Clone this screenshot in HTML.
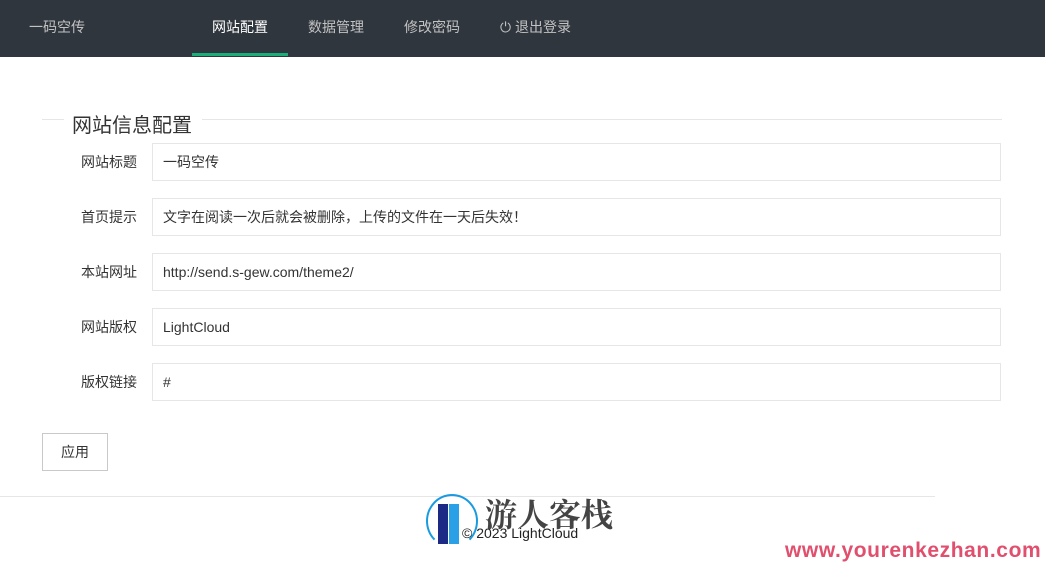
<!DOCTYPE html>
<html><head><meta charset="utf-8"><style>
body{margin:0;width:1045px;height:569px;background:#fff;font-family:"Liberation Sans","Noto Sans CJK SC",sans-serif;position:relative;overflow:hidden;color:#333}
.nav{position:absolute;left:0;top:0;width:1045px;height:57px;background:#30363e}
.nav span{position:absolute;top:17px;font-size:14px;color:#c2c2c2}
.ul{position:absolute;left:192px;top:53px;width:96px;height:3px;background:#1aae7a}
.legend{position:absolute;left:42px;top:119px;width:960px;border-top:1px solid #e6e6e6}
.legend span{position:absolute;left:22px;top:-11px;background:#fff;padding:0 10px 0 8px;font-size:20px;color:#333}
.lab{position:absolute;left:60px;width:77px;text-align:right;font-size:14px;color:#333}
.inp{position:absolute;left:152px;width:837px;height:36px;border:1px solid #e6e6e6;padding-left:10px;line-height:36px;font-size:14px;color:#333}
.btn{position:absolute;left:42px;top:433px;width:64px;height:36px;border:1px solid #c9c9c9;text-align:center;line-height:36px;font-size:14px}
</style></head><body>
<div class="nav">
<span style="left:29px">一码空传</span>
<span style="left:212px;color:#fff">网站配置</span>
<span style="left:308px">数据管理</span>
<span style="left:404px">修改密码</span>
<span style="left:500px">⏻ 退出登录</span>
<div class="ul"></div>
</div>
<div class="legend"><span>网站信息配置</span></div>
<div class="lab" style="top:152px">网站标题</div><div class="inp" style="top:143px">一码空传</div>
<div class="lab" style="top:207px">首页提示</div><div class="inp" style="top:198px">文字在阅读一次后就会被删除，上传的文件在一天后失效！</div>
<div class="lab" style="top:262px">本站网址</div><div class="inp" style="top:253px">http://send.s-gew.com/theme2/</div>
<div class="lab" style="top:317px">网站版权</div><div class="inp" style="top:308px">LightCloud</div>
<div class="lab" style="top:372px">版权链接</div><div class="inp" style="top:363px">#</div>
<div class="btn">应用</div>
<div style="position:absolute;left:0;top:496px;width:935px;border-top:1px solid #e6e6e6"></div>
<div style="position:absolute;left:426px;top:494px;width:48px;height:50px;border:2px solid #1a9be0;border-radius:50%;border-bottom-color:transparent"></div>
<div style="position:absolute;left:438px;top:504px;width:10px;height:40px;background:#1c2a86"></div>
<div style="position:absolute;left:449px;top:504px;width:10px;height:40px;background:#2aa0e6"></div>
<div style="position:absolute;left:485px;top:494px;font-size:32px;font-weight:bold;color:#444;font-family:'Noto Serif CJK SC',serif;line-height:38px">游人客栈</div>
<div style="position:absolute;left:462px;top:525px;font-size:14px;color:#222">© 2023 LightCloud</div>
<div style="position:absolute;left:785px;top:539px;font-size:21px;font-weight:bold;color:#e0506e;letter-spacing:0.6px">www.yourenkezhan.com</div>
</body></html>
